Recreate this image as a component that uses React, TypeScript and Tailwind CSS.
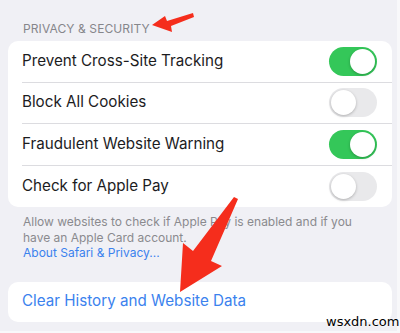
import React from 'react';

const rows = [
  { label: 'Prevent Cross-Site Tracking', on: true },
  { label: 'Block All Cookies', on: false },
  { label: 'Fraudulent Website Warning', on: true },
  { label: 'Check for Apple Pay', on: false },
];

const Toggle = ({ on }: { on: boolean }) => (
  <div
    className={`relative h-[29px] w-[48px] rounded-full ${on ? 'bg-[#34c759]' : 'bg-[#e9e9eb]'}`}
  >
    <div
      className={`absolute top-[2px] h-[25px] w-[25px] rounded-full bg-white shadow-[0_1px_3px_rgba(0,0,0,0.25)] ${on ? 'left-[21px]' : 'left-[2px]'}`}
    />
  </div>
);

const App = () => {
  return (
    <div
      className="relative h-[333px] w-[400px] overflow-hidden bg-[#f0f0f5] shadow-[inset_-3px_-2px_0_#f8f8fa]"
      style={{ fontFamily: 'Inter, "Noto Sans", sans-serif' }}
    >
      <div className="px-[8px] pt-[21px]">
        {/* header */}
        <div className="pl-[15px] text-[12px] leading-[16px] tracking-[0.1px] text-[#86868b]">
          PRIVACY &amp; SECURITY
        </div>

        {/* toggles */}
        <div className="mt-[4px] rounded-[10px] bg-white">
          {rows.map((r, i) => (
            <div key={r.label} className="flex h-[41.5px] items-center pl-[14px]">
              <div
                className={`flex h-full flex-1 items-center justify-between pr-[15px] ${i < rows.length - 1 ? 'border-b border-[#dcdce0]' : ''}`}
              >
                <span className="text-[15.2px] text-[#1c1c1e]">{r.label}</span>
                <Toggle on={r.on} />
              </div>
            </div>
          ))}
        </div>

        {/* footer */}
        <div className="mt-[7px] pl-[15px] pr-[12px] text-[12px] leading-[15.5px] text-[#8a8a8e]">
          Allow websites to check if Apple Pay is enabled and if you have an Apple Card account.
          <div className="text-[#3b82ee]">About Safari &amp; Privacy...</div>
        </div>

        {/* clear history */}
        <div className="mt-[21px] flex h-[40px] items-center rounded-[10px] bg-white pl-[14px]">
          <span className="text-[15.2px] text-[#3b82ee]">Clear History and Website Data</span>
        </div>
      </div>

      {/* annotation arrows */}
      <svg className="absolute left-0 top-0" width="400" height="333" viewBox="0 0 400 333">
        <polygon
          points="152,25 165,16 167,21 193,13 194,17 171,26 172,32"
          fill="#f52d1c"
        />
        <polygon
          points="234,197 238,199 211,261 222,266 180,292 183,243 193,251"
          fill="#f52d1c"
        />
      </svg>

      {/* watermark */}
      <div
        className="absolute left-[326px] top-[313px] text-[13px] leading-[18px] text-black"
        style={{ fontFamily: '"DejaVu Sans", sans-serif', textShadow: '0 0 2px #fff, 0 0 2px #fff' }}
      >
        wsxdn.com
      </div>
    </div>
  );
};

export default App;
